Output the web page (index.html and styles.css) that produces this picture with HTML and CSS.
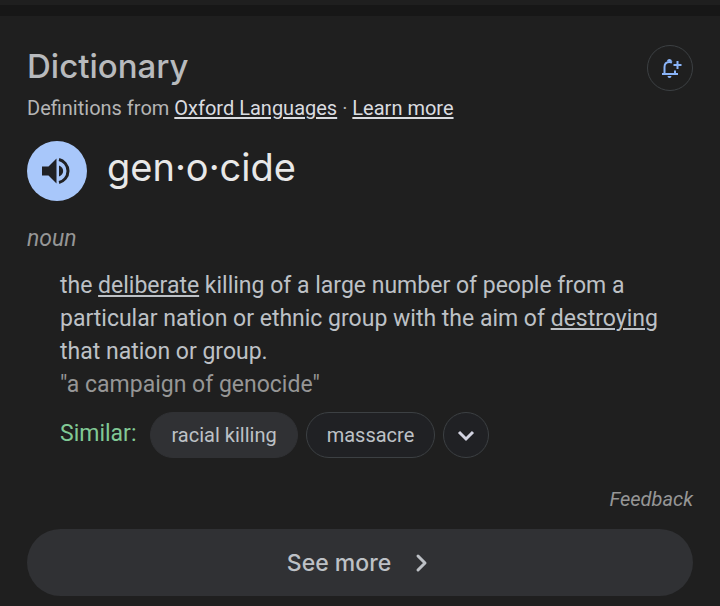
FILE: index.html
```html
<!DOCTYPE html>
<html lang="en">
<head>
<meta charset="utf-8">
<meta name="viewport" content="width=device-width, initial-scale=1">
<title>Dictionary</title>
<link rel="stylesheet" href="styles.css">
</head>
<body>
<div class="divider"></div>
<main class="card">
  <header class="header">
    <div>
      <h1 class="title">Dictionary</h1>
      <p class="source">Definitions from <a href="#oxford">Oxford Languages</a> · <a href="#learn">Learn more</a></p>
    </div>
    <button class="round notify" type="button" aria-label="Add word alert">
      <svg width="24" height="24" viewBox="0 0 24 24" fill="none" stroke="currentColor" stroke-width="2">
        <path d="M4 18h16M6.500 18v-7c0-3.500 2.200-5 5-5q1.500 0 2.500.5M17 14.500v3.500"/>
        <path d="M19.500 5v8M15.500 9h8"/>
        <path d="M9 5.500a2.500 2.500 0 0 1 5 0zM9.500 20h4a2 2 0 0 1-4 0z" fill="currentColor" stroke="none"/>
      </svg>
    </button>
  </header>
  <div class="entry">
    <button class="speak" type="button" aria-label="Listen">
      <svg width="32" height="32" viewBox="0 0 32 32" fill="none">
        <path d="M1 11.500h6.500l8-8v25l-8-8H1z" fill="currentColor"/>
        <path d="M18 10.500c5.500 2 5.500 9 0 11z" fill="currentColor"/>
        <path d="M18 4.500c4.500 1 9 5.500 9 11.500s-4.500 10.500-9 11.500" stroke="currentColor" stroke-width="3"/>
      </svg>
    </button>
    <h2 class="word">gen·o·cide</h2>
  </div>
  <p class="speech">noun</p>
  <section class="sense">
    <p class="definition">the <a href="#deliberate">deliberate</a> killing of a large number of people from a particular nation or ethnic group with the aim of <a href="#destroying">destroying</a> that nation or group.</p>
    <p class="example">"a campaign of genocide"</p>
    <div class="similar">
      <span class="label">Similar:</span>
      <button class="chip filled" type="button">racial killing</button>
      <button class="chip" type="button">massacre</button>
      <button class="round expand" type="button" aria-label="Show more similar words">
        <svg width="20" height="20" viewBox="0 0 20 20" fill="none" stroke="currentColor" stroke-width="3"><path d="M3 7l7 7 7-7"/></svg>
      </button>
    </div>
  </section>
  <a class="feedback" href="#feedback">Feedback</a>
  <button class="more" type="button">See more
    <svg width="20" height="20" viewBox="0 0 20 20" fill="none" stroke="currentColor" stroke-width="3" stroke-linecap="round" stroke-linejoin="round"><path d="M5 3l7 7-7 7"/></svg>
  </button>
</main>
</body>
</html>
```
FILE: styles.css
```css
* { box-sizing: border-box; }
body {
  margin: 0;
  padding-top: 5px;
  background: #1f1f1f;
  color: #bdc1c6;
  font-family: Roboto, sans-serif;
}
h1, h2, p { margin: 0; font-weight: 400; }
a { color: inherit; text-decoration-thickness: 2px; text-underline-offset: 2px; }
button { margin: 0; padding: 0; border: 0; font: inherit; color: inherit; }
svg { display: block; }
.divider { height: 11px; background: #171717; }
.card {
  display: flex;
  flex-direction: column;
  padding: 29px 27px 10px;
}
.header { display: flex; justify-content: space-between; align-items: flex-start; }
.title { font-family: Inter, sans-serif; font-size: 33px; font-weight: 500; line-height: 42px; color: #b8babd; }
.source { margin-top: 7px; font-size: 20px; line-height: 28px; color: #b5b5b5; }
.source a { color: #dadce0; }
.round {
  display: grid;
  place-items: center;
  width: 46px;
  height: 46px;
  border: 1px solid #3c4043;
  border-radius: 50%;
}
.notify { background: transparent; color: #8ab4f8; }
.entry { display: flex; align-items: flex-start; gap: 20px; margin-top: 19px; }
.speak {
  display: grid;
  place-items: center;
  width: 60px;
  height: 60px;
  border-radius: 50%;
  background: #a8c7fa;
  color: #202124;
}
.word { font-family: Inter, sans-serif; font-size: 38px; line-height: 52px; color: #e8e8e8; }
.speech { margin-top: 21px; font-size: 23px; line-height: 33px; font-style: italic; color: #969696; }
.sense { margin-top: 14px; padding-left: 33px; }
.definition, .example { font-size: 23px; line-height: 33px; }
.example { color: #969696; }
.similar { display: flex; align-items: center; gap: 8px; margin-top: 11px; }
.label { margin-right: 6px; padding-bottom: 4px; font-size: 23px; color: #81c995; }
.chip {
  height: 46px;
  padding: 0 20px;
  border: 1px solid #3c4043;
  border-radius: 23px;
  background: #202124;
  font-size: 20px;
}
.filled { background: #303134; border-color: #303134; }
.expand { background: #202124; color: #d2d3e0; }
.feedback {
  align-self: flex-end;
  margin-top: 27px;
  font-size: 20px;
  line-height: 28px;
  font-style: italic;
  color: #969696;
  text-decoration: none;
}
.more {
  display: flex;
  align-items: center;
  justify-content: center;
  gap: 22px;
  height: 67px;
  margin-top: 16px;
  border-radius: 34px;
  background: #303134;
  font-family: Inter, sans-serif;
  font-size: 23px;
  font-weight: 500;
}
```
